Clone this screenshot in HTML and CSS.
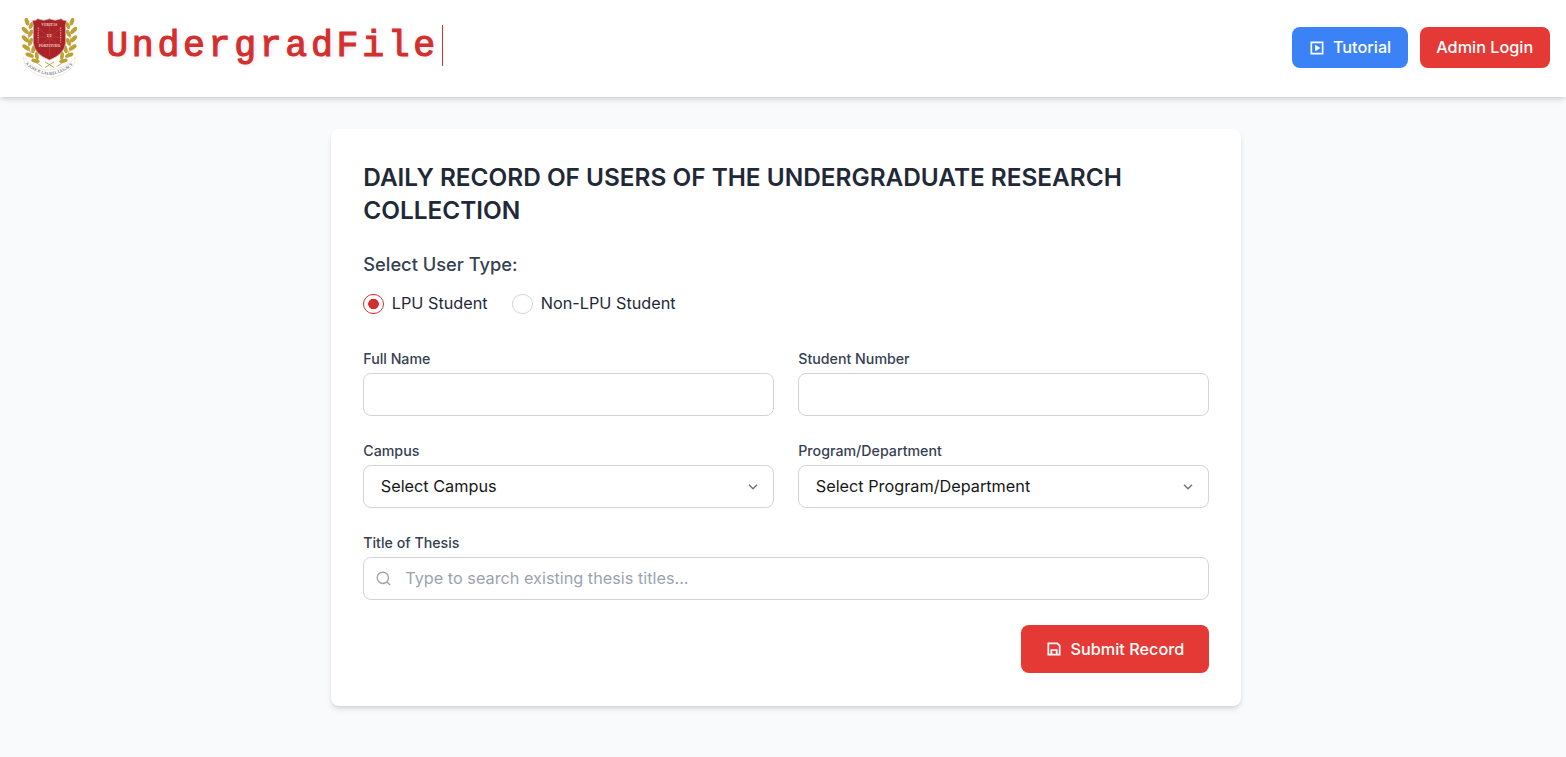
FILE: index.html
```html
<!DOCTYPE html>
<html lang="en">
<head>
<meta charset="utf-8">
<title>UndergradFile</title>
<link rel="stylesheet" href="styles.css">
</head>
<body>
<header class="header">
  <div class="brand">
    <svg class="crest" viewBox="-2 0 69 66" preserveAspectRatio="none" role="img" aria-label="University crest">
      <defs>
        <path id="motto" d="M6 50 Q16 60 33 62 Q50 60 61 49"/>
        <g id="laurel" fill="#bfa034">
          <path d="M25 53 Q7 46 10 19" fill="none" stroke="#c9ad4a" stroke-width="1"/>
          <ellipse cx="8" cy="6" rx="2.3" ry="4.2" transform="rotate(-20 8 6)"/>
          <ellipse cx="12.5" cy="10" rx="2.1" ry="3.8" transform="rotate(25 12.5 10)"/>
          <ellipse cx="6" cy="15" rx="2.3" ry="4.8" transform="rotate(-48 6 15)"/>
          <ellipse cx="12" cy="18" rx="2.2" ry="4.2" transform="rotate(28 12 18)"/>
          <ellipse cx="6" cy="24" rx="2.3" ry="4.8" transform="rotate(-48 6 24)"/>
          <ellipse cx="12" cy="27" rx="2.2" ry="4.2" transform="rotate(22 12 27)"/>
          <ellipse cx="7" cy="33" rx="2.3" ry="4.8" transform="rotate(-58 7 33)"/>
          <ellipse cx="15" cy="35" rx="2.2" ry="4.2" transform="rotate(12 15 35)"/>
          <ellipse cx="11" cy="41" rx="2.2" ry="4.9" transform="rotate(-70 11 41)"/>
          <ellipse cx="19" cy="42" rx="2.1" ry="4.2" transform="rotate(-8 19 42)"/>
          <ellipse cx="17.5" cy="47" rx="2" ry="4.8" transform="rotate(-78 17.5 47)"/>
        </g>
      </defs>
      <use href="#laurel"/>
      <use href="#laurel" transform="translate(66 0) scale(-1 1)"/>
      <path d="M14 5Q18 5 20 3Q27 6 33 3Q39 6 46 3Q48 5 52 5Q50 10 51 17V28Q50 40 33 46Q16 40 15 28V17Q16 10 14 5Z" fill="#a92328" stroke="#d4b0a7" stroke-width=".8"/>
      <path d="M33 8V42M20 12L46 33M46 12L20 33M19 22H47" stroke="#c65545" stroke-width=".5"/>
      <g fill="#efd5ce" font-family="Liberation Serif, serif" font-size="4" font-weight="bold" text-anchor="middle">
        <text x="33" y="11">VERITAS</text><text x="33" y="22">ET</text><text x="33" y="33">FORTITUDO</text>
      </g>
      <path d="M20.5 12V28M45.5 12V28" stroke="#d99b8f" stroke-width="1.2" stroke-dasharray="1.5 1"/>
      <path d="M28 54L38 48M28 48L38 54" stroke="#b9993b" stroke-width="1"/>
      <path d="M4 43Q14 55 33 57Q52 55 62 43L60 52Q50 63 33 65Q16 63 6 52Z" fill="#fff" stroke="#dfd7c2" stroke-width=".6"/>
      <text font-family="Liberation Serif, serif" font-size="4.5" font-weight="bold" fill="#777780"><textPath href="#motto" textLength="59">A JOSE P. LAUREL LEGACY</textPath></text>
    </svg>
    <h1 class="wordmark">UndergradFile</h1>
  </div>
  <nav class="actions">
    <button class="button tutorial">
      <svg class="button-icon" viewBox="0 0 24 24" fill="none" stroke="currentColor" stroke-width="2.4"><path d="M3.5 3.5h17v17h-17z"/><path d="M10 8.5L15.5 12L10 15.5z" fill="currentColor" stroke-width="1.6"/></svg>
      Tutorial
    </button>
    <button class="button">Admin Login</button>
  </nav>
</header>
<main class="main">
  <form class="card">
    <h2 class="title">DAILY RECORD OF USERS OF THE UNDERGRADUATE RESEARCH COLLECTION</h2>
    <h3 class="subtitle">Select User Type:</h3>
    <div class="choices">
      <label class="choice"><input class="radio" type="radio" name="user" checked>LPU Student</label>
      <label class="choice"><input class="radio" type="radio" name="user">Non-LPU Student</label>
    </div>
    <div class="fields">
      <div class="field"><label class="label" for="name">Full Name</label><input class="control" id="name" type="text"></div>
      <div class="field"><label class="label" for="number">Student Number</label><input class="control" id="number" type="text"></div>
      <div class="field">
        <label class="label">Campus</label>
        <div class="control select"><span>Select Campus</span><svg class="chevron" viewBox="0 0 10 6" fill="none" stroke="currentColor" stroke-width="1.4"><path d="M1 .8L5 4.8L9 .8"/></svg></div>
      </div>
      <div class="field">
        <label class="label">Program/Department</label>
        <div class="control select"><span>Select Program/Department</span><svg class="chevron" viewBox="0 0 10 6" fill="none" stroke="currentColor" stroke-width="1.4"><path d="M1 .8L5 4.8L9 .8"/></svg></div>
      </div>
      <div class="field wide">
        <label class="label" for="thesis">Title of Thesis</label>
        <div class="control search">
          <svg class="search-icon" viewBox="0 0 16 16" fill="none" stroke="currentColor" stroke-width="1.5"><circle cx="7.3" cy="7.3" r="6"/><path d="M11.7 11.7L15 15"/></svg>
          <input class="search-input" id="thesis" type="text" placeholder="Type to search existing thesis titles...">
        </div>
      </div>
    </div>
    <button class="button submit" type="button">
      <svg class="button-icon" viewBox="0 0 24 24" fill="none" stroke="currentColor" stroke-width="2.6"><path d="M3.5 3.5h13.5l3.5 3.5v13.5h-17z"/><path d="M8 20v-6.5h8v6.5"/></svg>
      Submit Record
    </button>
  </form>
</main>
</body>
</html>
```
FILE: styles.css
```css
* { box-sizing: border-box; }
html { font-size: 16.25px; }
body { margin: 0; min-height: 100vh; background: #f9fafb; color: #1f2937; font-family: Inter, sans-serif; line-height: 1.5; }
button, input { font: inherit; }
h1, h2, h3 { margin: 0; }
.header { position: relative; display: flex; justify-content: space-between; align-items: center; height: 97px; padding: 0 1rem 2px; background: #fff; box-shadow: 0 4px 6px -1px rgba(0,0,0,.1), 0 2px 4px -1px rgba(0,0,0,.1); }
.brand { display: flex; align-items: center; gap: 26px; }
.crest { width: 62px; height: 63px; margin-left: 2px; }
.wordmark { height: 41px; margin-bottom: 5px; border-right: 1.5px solid #d32f2f; padding-right: 3px; color: #d32f2f; font: normal 36.56px/43px "Liberation Mono", monospace; letter-spacing: 3.656px; -webkit-text-stroke: 1.1px #d32f2f; text-shadow: 2px 2px 4px rgba(0,0,0,.1); }
.actions { display: flex; gap: 12px; }
.button { display: flex; align-items: center; justify-content: center; height: 41px; padding: 0 16.5px; border: 0; border-radius: 8px; background: #e53935; color: #fff; font-weight: 500; }
.tutorial { background: #3b82f6; }
.button-icon { width: 16px; height: 16px; margin-right: 8.5px; }
.tutorial .button-icon { margin-right: 8px; }
.main { display: flex; justify-content: center; padding: 32px 0 0 5.5px; }
.card { display: flex; flex-direction: column; width: 910px; height: 577px; padding: 31.5px 32px 32px 32.5px; border-radius: 8px; background: #fff; box-shadow: 0 4px 6px -1px rgba(0,0,0,.1), 0 2px 4px -1px rgba(0,0,0,.1); }
.title { font-size: 1.5rem; line-height: 33px; font-weight: 600; margin-bottom: 23.5px; }
.subtitle { margin-bottom: 12px; color: #374151; font-size: 1.125rem; line-height: 28px; font-weight: 500; }
.choices { display: flex; gap: 24.5px; height: 26px; align-items: center; margin-bottom: 31.5px; }
.choice { display: flex; align-items: center; gap: 8px; line-height: 24px; }
.radio { appearance: none; width: 20.5px; height: 20.5px; margin: 2px 0 0; border: 1.5px solid #d1d5db; border-radius: 50%; }
.radio:checked { border-color: #d32f2f; background: radial-gradient(circle, #d32f2f 5px, transparent 5.6px); }
.fields { display: grid; grid-template-columns: 1fr 1fr; gap: 24px 24.5px; }
.field { display: flex; flex-direction: column; gap: 4px; }
.wide { grid-column: 1 / -1; }
.label { color: #374151; font-size: .875rem; line-height: 21px; font-weight: 500; }
.control { width: 100%; height: 43px; border: 1.3px solid #d1d5db; border-radius: 8px; background: #fff; }
.select { display: flex; justify-content: space-between; align-items: center; padding: 1px 15px 0 16.5px; color: #171717; }
.chevron { width: 10px; height: 6px; color: #6b7280; }
.search { display: flex; align-items: center; gap: 14px; padding: 1px 12px 0; }
.search-icon { width: 15px; height: 15px; color: #9ca3af; }
.search-input { flex: 1; padding: 0; border: 0; outline: 0; background: transparent; }
.search-input::placeholder { color: #9ca3af; }
.submit { align-self: flex-end; height: 48.5px; padding: 0 24.5px; margin-top: 25px; }
```
